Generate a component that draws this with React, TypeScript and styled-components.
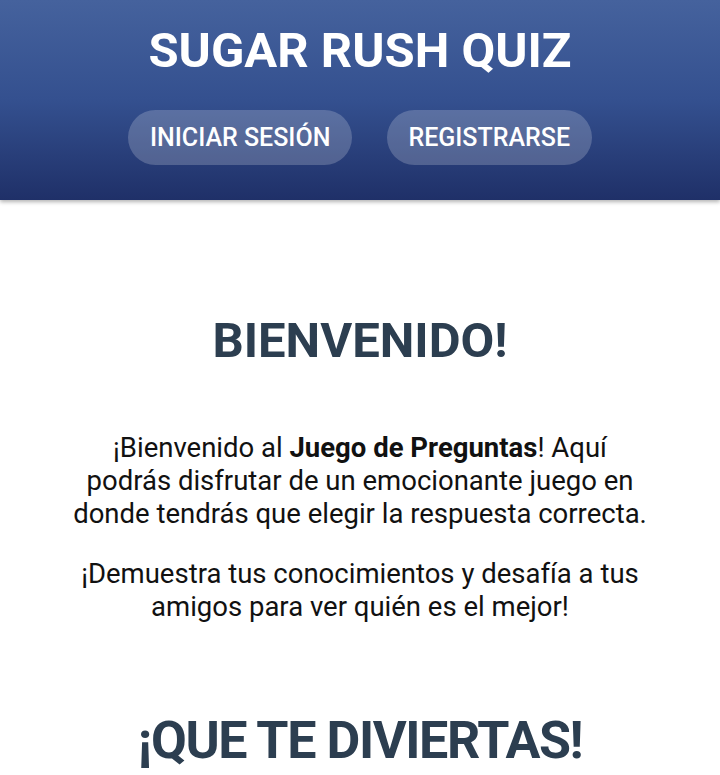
import React from "react";
import styled, { createGlobalStyle } from "styled-components";

const Global = createGlobalStyle`
  html, body { margin: 0; padding: 0; background: #ffffff; }
  body { font-family: Roboto, "Noto Sans", sans-serif; }
  * { box-sizing: border-box; }
`;

const Header = styled.header`
  height: 200px;
  background: linear-gradient(180deg, #45629d 0%, #34508f 50%, #1f3068 100%);
  box-shadow: 0 2px 4px rgba(0, 0, 0, 0.3);
  display: flex;
  flex-direction: column;
  align-items: center;
  padding-top: 23px;
`;

const Title = styled.h1`
  margin: 0;
  color: #ffffff;
  font-family: Roboto, sans-serif;
  font-weight: 700;
  font-size: 49px;
  line-height: 56px;
`;

const Nav = styled.nav`
  display: flex;
  gap: 35px;
  margin-top: 31px;
`;

const NavButton = styled.button`
  height: 55px;
  padding: 0 21.5px;
  border: none;
  border-radius: 28px;
  background: rgba(255, 255, 255, 0.2);
  color: #ffffff;
  font-family: Roboto, sans-serif;
  font-weight: 500;
  font-size: 25px;
  cursor: pointer;
`;

const Main = styled.main`
  display: flex;
  flex-direction: column;
  align-items: center;
  padding: 112px 20px 0;
  text-align: center;
`;

const Heading = styled.h2<{ $size: number; $spacing?: number }>`
  margin: 0;
  color: #2c3e50;
  font-family: Roboto, sans-serif;
  font-weight: 700;
  font-size: ${(p) => p.$size}px;
  line-height: ${(p) => Math.round(p.$size * 1.19)}px;
  letter-spacing: ${(p) => p.$spacing ?? 0}px;
  white-space: nowrap;
`;

const Text = styled.p`
  margin: 0;
  max-width: 600px;
  color: #111111;
  font-family: Roboto, sans-serif;
  font-size: 27.5px;
  line-height: 33px;
`;

const Body = styled.div`
  display: flex;
  flex-direction: column;
  align-items: center;
  gap: 27px;
  margin-top: 61px;
  margin-bottom: 87px;
`;

export default function App() {
  return (
    <>
      <Global />
      <Header>
        <Title>SUGAR RUSH QUIZ</Title>
        <Nav>
          <NavButton>INICIAR SESIÓN</NavButton>
          <NavButton>REGISTRARSE</NavButton>
        </Nav>
      </Header>
      <Main>
        <Heading $size={49}>BIENVENIDO!</Heading>
        <Body>
          <Text>
            ¡Bienvenido al <strong>Juego de Preguntas</strong>! Aquí
            <br />
            podrás disfrutar de un emocionante juego en
            <br />
            donde tendrás que elegir la respuesta correcta.
          </Text>
          <Text>
            ¡Demuestra tus conocimientos y desafía a tus
            <br />
            amigos para ver quién es el mejor!
          </Text>
        </Body>
        <Heading $size={52} $spacing={-1.4}>¡QUE TE DIVIERTAS!</Heading>
      </Main>
    </>
  );
}
